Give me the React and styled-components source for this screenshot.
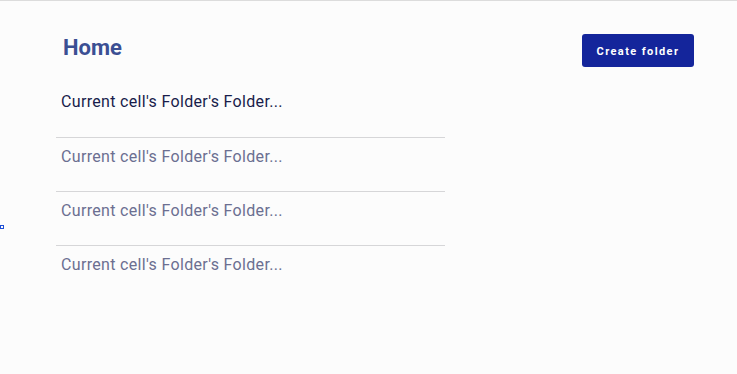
import React from "react";
import styled, { createGlobalStyle } from "styled-components";

const GlobalStyle = createGlobalStyle`
  html, body {
    margin: 0;
    padding: 0;
    background: #fcfcfc;
  }
  body {
    font-family: Roboto, "Noto Sans", sans-serif;
  }
`;

// Page frame with the thin grey rule along the top
const Page = styled.div`
  position: relative;
  min-height: 374px;
  box-sizing: border-box;
  border-top: 1px solid #dcdcdc;
  padding: 33px 43px 0 56px;
`;

const Header = styled.div`
  display: flex;
  justify-content: space-between;
  align-items: flex-start;
`;

const Title = styled.h1`
  margin: 0;
  padding: 1px 0 0 7px;
  font-size: 22px;
  line-height: 26px;
  font-weight: 700;
  color: #3b4f93;
`;

const CreateButton = styled.button`
  height: 33px;
  width: 112px;
  padding: 2px 0 0;
  border: none;
  border-radius: 3px;
  background: #14259b;
  color: #ffffff;
  font-family: Roboto, sans-serif;
  font-size: 11px;
  font-weight: 700;
  letter-spacing: 1.4px;
  cursor: pointer;
`;

const FolderList = styled.ul`
  list-style: none;
  margin: 16px 0 0;
  padding: 0;
  width: 389px;
`;

const FolderRow = styled.li`
  box-sizing: border-box;
  height: 54px;
  padding: 9px 0 0 5px;
  border-top: ${(p) => (p.$first ? "none" : "1px solid #d6d6d8")};
  font-size: 16px;
  line-height: 20px;
  letter-spacing: 0.33px;
  color: ${(p) => (p.$active ? "#181d4b" : "#6b6f91")};
`;

// tiny focus marker at the left page edge
const FocusMark = styled.span`
  position: absolute;
  left: 0;
  top: 224px;
  width: 2px;
  height: 2px;
  border: 1px solid #1f4fd6;
`;

const folders = [
  "Current cell's Folder's Folder...",
  "Current cell's Folder's Folder...",
  "Current cell's Folder's Folder...",
  "Current cell's Folder's Folder...",
];

export default function App() {
  return (
    <>
      <GlobalStyle />
      <Page>
        <Header>
          <Title>Home</Title>
          <CreateButton>Create folder</CreateButton>
        </Header>
        <FolderList>
          {folders.map((name, i) => (
            <FolderRow key={i} $first={i === 0} $active={i === 0}>
              {name}
            </FolderRow>
          ))}
        </FolderList>
        <FocusMark />
      </Page>
    </>
  );
}
